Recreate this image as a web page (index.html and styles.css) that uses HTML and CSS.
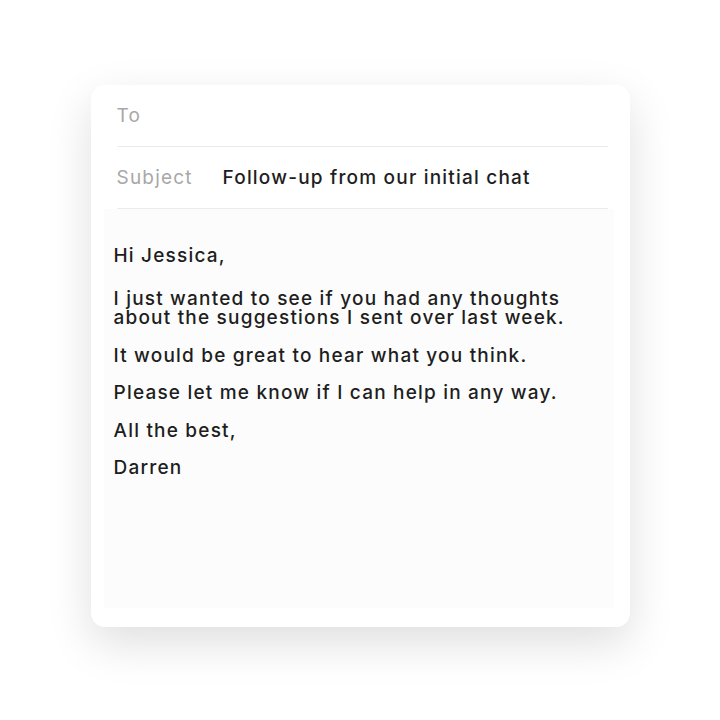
FILE: index.html
```html
<!DOCTYPE html>
<html lang="en">
<head>
    <meta charset="UTF-8">
    <title>New message</title>
    <link rel="stylesheet" href="styles.css">
</head>
<body>

<div class="mail-card">
    <div class="field">
        <span class="field-label">To</span>
    </div>
    <div class="field">
        <span class="field-label">Subject</span>
        <span class="field-value">Follow-up from our initial chat</span>
    </div>
    <div class="mail-body">
        <p class="greeting">Hi Jessica,</p>
        <p>I just wanted to see if you had any thoughts<br>about the suggestions I sent over last week.</p>
        <p>It would be great to hear what you think.</p>
        <p>Please let me know if I can help in any way.</p>
        <p>All the best,</p>
        <p>Darren</p>
    </div>
</div>

</body>
</html>
```

FILE: styles.css
```css
body {
    margin: 0;
    min-height: 720px;
    padding-top: 85px;
    box-sizing: border-box;
    background: #fff;
    font-family: Inter, "Liberation Sans", Arial, sans-serif;
    font-size: 19px;
    letter-spacing: 1.2px;
    color: #1e1e1e;
}
.mail-card {
    width: 539px;
    height: 542px;
    margin: 0 auto;
    background: #fff;
    border-radius: 14px;
    box-shadow: 0 16px 45px rgba(0,0,0,0.13);
    padding: 0 16px 19px 13px;
    box-sizing: border-box;
    display: flex;
    flex-direction: column;
}
.field {
    display: flex;
    align-items: center;
    height: 61px;
    margin: 0 6px 0 13px;
    border-bottom: 1px solid #ececec;
}
.field-label {
    color: #a8a8a8;
    width: 106px;
}
.field-value {
    font-weight: 500;
}
.mail-body {
    flex: 1;
    background: #fcfcfc;
    padding: 37px 10px 20px;
    font-weight: 500;
    line-height: 19px;
}
.mail-body p {
    margin: 0 0 18.5px;
}
.mail-body .greeting {
    margin-bottom: 24px;
}
```
